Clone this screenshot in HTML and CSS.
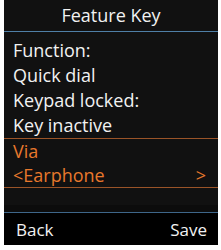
FILE: index.html
```html
<!DOCTYPE html>
<html lang="en">
<head>
    <meta charset="UTF-8">
    <title>Feature Key</title>
    <link rel="stylesheet" href="styles.css">
</head>
<body>
    <div class="screen">
        <div class="header">Feature Key</div>
        <div class="content">
            <div class="row">Function:</div>
            <div class="row">Quick dial</div>
            <div class="row">Keypad locked:</div>
            <div class="row">Key inactive</div>
            <div class="selected">
                <div class="row">Via</div>
                <div class="row option">
                    <span>&lt;Earphone</span>
                    <span>&gt;</span>
                </div>
            </div>
            <div class="filler"></div>
        </div>
        <div class="footer">
            <span>Back</span>
            <span>Save</span>
        </div>
    </div>
</body>
</html>
```

FILE: styles.css
```css
body {
    margin: 0;
    background-color: #ffffff;
    font-family: "Open Sans", "Noto Sans", sans-serif;
}
.screen {
    margin-left: 4px;
    width: 214px;
    height: 245px;
    background-color: #111111;
    color: #f2f2f2;
    display: flex;
    flex-direction: column;
}
.header {
    height: 31px;
    line-height: 31px;
    text-align: center;
    font-size: 18px;
    border-bottom: 1px solid #4f7fa6;
}
.content {
    flex: 1;
    display: flex;
    flex-direction: column;
    padding-top: 6px;
}
.row {
    font-size: 18px;
    line-height: 25px;
    padding: 0 9px;
}
.selected {
    color: #e8782c;
    border-top: 1px solid #9a5428;
    border-bottom: 1px solid #9a5428;
}
.selected .row {
    line-height: 24px;
}
.option {
    display: flex;
    justify-content: space-between;
    padding-right: 12px;
}
.filler {
    flex: 1;
    border-bottom: 7px solid #0c0c0c;
}
.footer {
    height: 32px;
    background-color: #000000;
    border-top: 1px solid #3e6689;
    display: flex;
    justify-content: space-between;
    align-items: center;
    padding: 0 11px 0 12px;
    font-size: 17px;
}
```
